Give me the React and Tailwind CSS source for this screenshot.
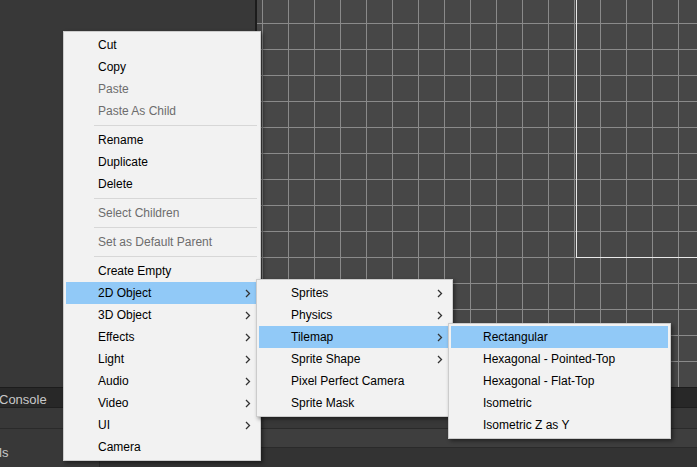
import React from 'react';

const MAIN_MENU = [
  { label: 'Cut' },
  { label: 'Copy' },
  { label: 'Paste', disabled: true },
  { label: 'Paste As Child', disabled: true },
  { sep: true },
  { label: 'Rename' },
  { label: 'Duplicate' },
  { label: 'Delete' },
  { sep: true },
  { label: 'Select Children', disabled: true },
  { sep: true },
  { label: 'Set as Default Parent', disabled: true },
  { sep: true },
  { label: 'Create Empty' },
  { label: '2D Object', sub: true, active: true },
  { label: '3D Object', sub: true },
  { label: 'Effects', sub: true },
  { label: 'Light', sub: true },
  { label: 'Audio', sub: true },
  { label: 'Video', sub: true },
  { label: 'UI', sub: true },
  { label: 'Camera' },
];

const OBJECT_2D = [
  { label: 'Sprites', sub: true },
  { label: 'Physics', sub: true },
  { label: 'Tilemap', sub: true, active: true },
  { label: 'Sprite Shape', sub: true },
  { label: 'Pixel Perfect Camera' },
  { label: 'Sprite Mask' },
];

const TILEMAP = [
  { label: 'Rectangular', active: true },
  { label: 'Hexagonal - Pointed-Top' },
  { label: 'Hexagonal - Flat-Top' },
  { label: 'Isometric' },
  { label: 'Isometric Z as Y' },
];

function Chevron() {
  return (
    <svg width="6" height="9" viewBox="0 0 6 9" className="mr-[7px] shrink-0">
      <path d="M1 1 L4.5 4.5 L1 8" fill="none" stroke="#333333" strokeWidth="1.3" />
    </svg>
  );
}

function Menu({ items, className }) {
  return (
    <div
      className={`absolute bg-[#f2f2f2] border border-[#cccccc] p-[2px] shadow-[2px_2px_4px_rgba(0,0,0,0.45)] ${className}`}
    >
      {items.map((it, i) =>
        it.sep ? (
          <div key={i} className="h-[7px] flex items-center pl-[28px] pr-[1px]">
            <div className="h-px w-full bg-[#d7d7d7]" />
          </div>
        ) : (
          <div
            key={i}
            className={`h-[22px] flex items-center pl-[32px] ${it.active ? 'bg-[#91c9f7]' : ''} ${it.disabled ? 'text-[#6d6d6d]' : 'text-black'}`}
          >
            <span className="flex-1 whitespace-nowrap">{it.label}</span>
            {it.sub && <Chevron />}
          </div>
        )
      )}
    </div>
  );
}

export default function App() {
  return (
    <div className="relative w-[697px] h-[467px] overflow-hidden bg-[#383838] font-['Liberation_Sans',Arial,sans-serif] text-[12px] leading-none">
      {/* top: hierarchy + scene */}
      <div className="flex h-[387px]">
        <div className="w-[255px] bg-[#383838]" />
        <div className="w-[2px] bg-[#1c1c1c]" />
        <div className="relative flex-1 bg-[#474747] bg-[linear-gradient(to_right,#8a8a8a_1px,transparent_1px),linear-gradient(to_bottom,#8a8a8a_1px,transparent_1px)] bg-[length:26px_26px] bg-[position:5px_23px] overflow-hidden">
          {/* camera bounds */}
          <div className="absolute left-[319px] top-0 w-[200px] h-[258px] border-l border-b border-[#e8e8e8]" />
        </div>
      </div>

      {/* bottom panel */}
      <div className="h-px bg-[#1c1c1c]" />
      <div className="h-[19px] bg-[#282828] flex items-center pt-[3px] text-[#c8c8c8]">
        <span className="-ml-[1px] text-[13px]">Console</span>
      </div>
      <div className="h-px bg-[#1f1f1f]" />
      <div className="h-[20px] bg-[#383838]" />
      <div className="h-px bg-[#2a2a2a]" />
      <div className="flex h-[39px]">
        <div className="w-[100px] bg-[#383838] border-r border-[#2a2a2a] flex items-end pb-[9px] text-[#c8c8c8]">
          <span className="-ml-[1px] text-[13px]">ls</span>
        </div>
        <div className="flex-1 flex flex-col">
          <div className="h-[19px] bg-[#3e3e3e] border-b border-[#2a2a2a]" />
          <div className="flex-1 bg-[#333333]" />
        </div>
      </div>

      {/* context menus */}
      <Menu items={MAIN_MENU} className="left-[63px] top-[31px] w-[198px]" />
      <Menu items={OBJECT_2D} className="left-[256px] top-[279px] w-[197px]" />
      <Menu items={TILEMAP} className="left-[448px] top-[323px] w-[223px]" />
    </div>
  );
}
